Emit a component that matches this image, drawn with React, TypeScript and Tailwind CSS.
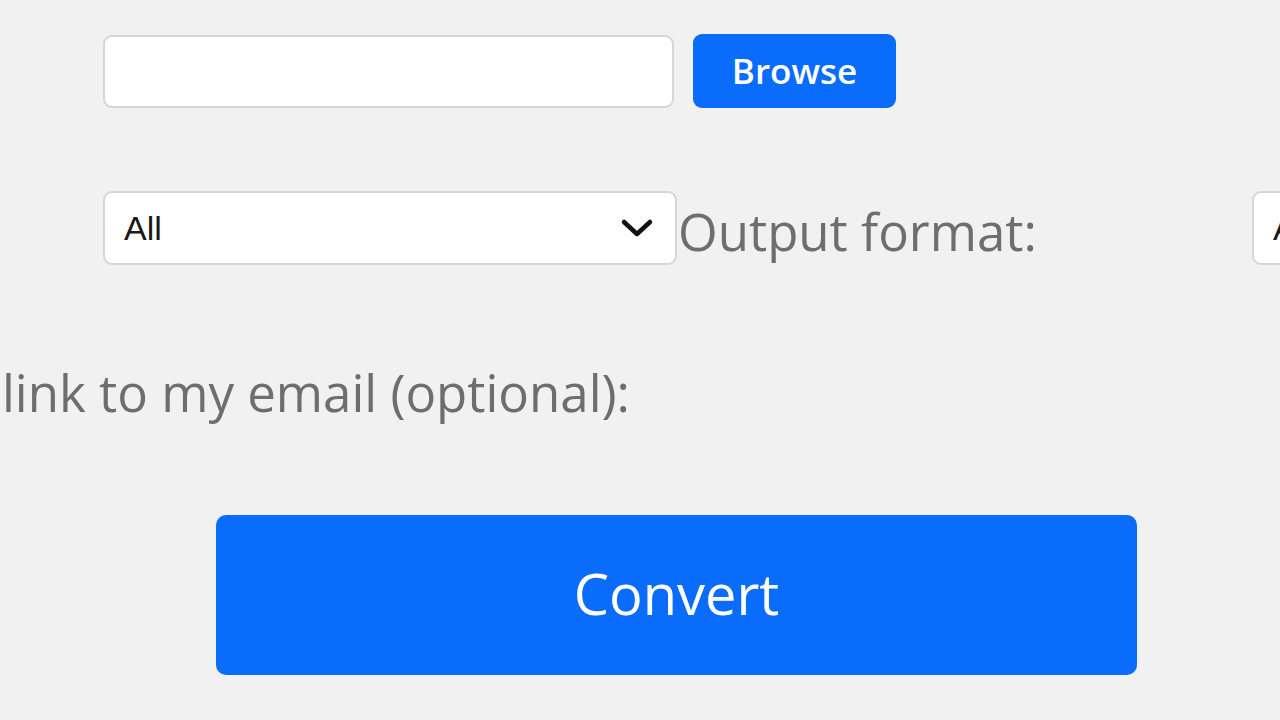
import React from "react";

function Chevron() {
  return (
    <svg width="34" height="22" viewBox="0 0 34 22" fill="none">
      <path d="M4 5 L17 17 L30 5" stroke="#111" strokeWidth="4.5" strokeLinecap="round" strokeLinejoin="round" />
    </svg>
  );
}

const selectFont = { fontFamily: '"Liberation Sans", Arial, sans-serif' };

export default function App() {
  return (
    <div
      className="w-[1280px] h-[720px] overflow-hidden bg-[#f1f1f1] text-[#6e6e6e]"
      style={{ fontFamily: '"Open Sans", "Noto Sans", sans-serif' }}
    >
      {/* file picker */}
      <div className="flex items-center pl-[103px] pt-[34px] gap-[19px]">
        <div className="w-[571px] h-[73px] bg-white border-2 border-[#d6d6d6] rounded-[9px]" />
        <button className="w-[203px] h-[74px] bg-[#0a6cfb] rounded-[9px] text-white text-[35px] font-semibold leading-none pb-[2px]">
          Browse
        </button>
      </div>

      {/* format selectors */}
      <div className="flex items-center pl-[103px] mt-[83px] whitespace-nowrap">
        <div className="w-[574px] h-[74px] shrink-0 bg-white border-2 border-[#d6d6d6] rounded-[9px] flex items-center justify-between pl-[19px] pr-[21px]">
          <span className="text-[34px] text-[#1a1a1a]" style={selectFont}>
            All
          </span>
          <Chevron />
        </div>
        <span className="text-[51px] leading-none ml-[1px] mt-[6px] w-[574px] shrink-0">Output format:</span>
        <div className="w-[300px] h-[74px] shrink-0 bg-white border-2 border-[#d6d6d6] rounded-[9px] flex items-center pl-[19px]">
          <span className="text-[34px] text-[#1a1a1a]" style={selectFont}>
            All
          </span>
        </div>
      </div>

      {/* email option */}
      <div className="mt-[102px] pl-[2px] text-[51px] leading-none whitespace-nowrap">link to my email (optional):</div>

      {/* submit */}
      <div className="pl-[216px] mt-[97px]">
        <button className="w-[921px] h-[160px] bg-[#0a6cfb] rounded-[10px] text-white text-[56px] leading-none pb-[4px]">
          Convert
        </button>
      </div>
    </div>
  );
}
